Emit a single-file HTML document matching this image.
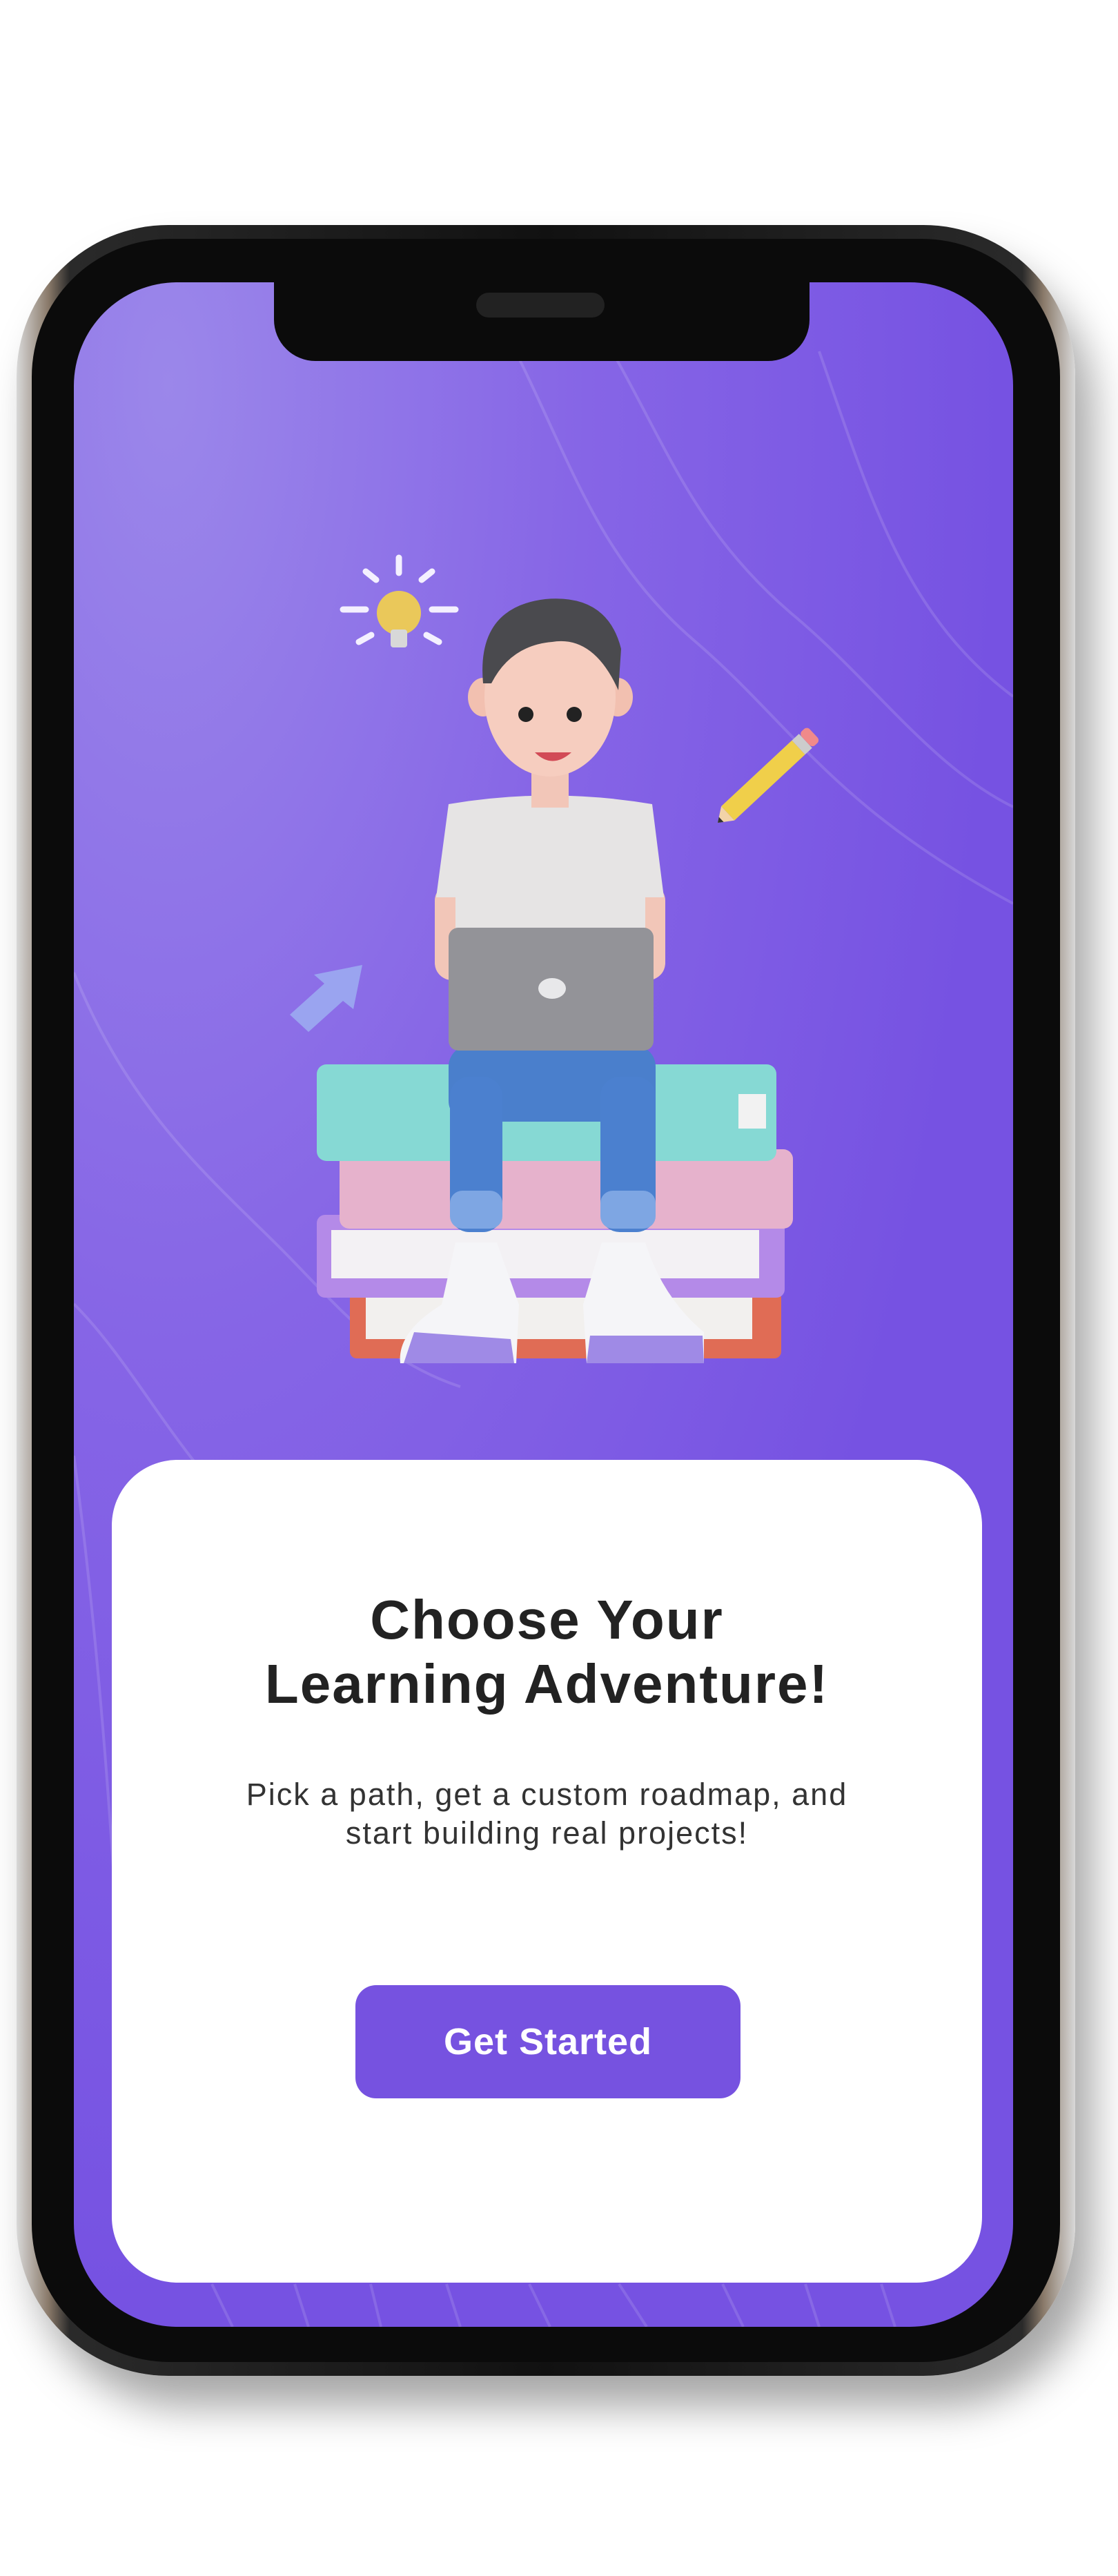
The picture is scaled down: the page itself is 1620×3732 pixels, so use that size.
<!DOCTYPE html>
<html><head><meta charset="utf-8"><style>
html,body{margin:0;padding:0;background:#fff;}
body{width:1620px;height:3732px;position:relative;overflow:hidden;font-family:"Liberation Sans",sans-serif;}
.abs{position:absolute;}
</style></head><body>
<!-- shadow -->
<div class="abs" style="left:24px;top:326px;width:1534px;height:3116px;border-radius:220px;box-shadow:25px 45px 60px rgba(0,0,0,0.35);"></div>
<!-- frame -->
<div class="abs" style="left:24px;top:326px;width:1534px;height:3116px;border-radius:220px;background:linear-gradient(90deg,#d8d8d8,#8a7a6a 3%,#2a2a2a 5%,#111 50%,#2a2a2a 95%,#8a7a6a 97%,#d8d8d8);"></div>
<div class="abs" style="left:46px;top:346px;width:1490px;height:3076px;border-radius:200px;background:#0b0b0b;"></div>
<!-- screen -->
<div class="abs" style="left:107px;top:409px;width:1361px;height:2962px;border-radius:150px;overflow:hidden;background:radial-gradient(ellipse at 10% 5%,#9b87ea 0%,#8665e6 35%,#7652e2 70%);">
<svg width="1361" height="2962" style="position:absolute;left:0;top:0" fill="none" stroke="rgba(255,255,255,0.13)" stroke-width="4">
<path d="M640 100 C720 260 760 400 900 520 C1040 640 1100 760 1361 900"/>
<path d="M780 100 C860 240 900 360 1040 480 C1160 580 1240 700 1361 760"/>
<path d="M1080 100 C1150 300 1200 480 1361 600"/>
<path d="M0 1000 C80 1200 200 1300 300 1400 C380 1480 440 1560 560 1600"/>
<path d="M0 1480 C80 1560 140 1680 220 1760"/>
<path d="M0 1700 C40 2000 60 2300 80 2700"/>
<path d="M200 2900 L230 2962 M320 2900 L340 2962 M430 2900 L445 2962 M540 2900 L560 2962 M660 2900 L690 2962 M790 2900 L830 2962 M940 2900 L970 2962 M1060 2900 L1080 2962 M1170 2900 L1190 2962"/>
</svg>
</div>
<!-- notch -->
<div class="abs" style="left:397px;top:400px;width:776px;height:123px;background:#0b0b0b;border-radius:0 0 60px 60px;"></div>
<div class="abs" style="left:690px;top:424px;width:186px;height:36px;border-radius:18px;background:#222;"></div>
<!-- illustration -->
<svg class="abs" style="left:0;top:0" width="1620" height="2100">
<g stroke="#f4f0ff" stroke-width="9" stroke-linecap="round">
<line x1="578" y1="808" x2="578" y2="830"/><line x1="530" y1="828" x2="545" y2="840"/><line x1="626" y1="828" x2="611" y2="840"/>
<line x1="497" y1="883" x2="530" y2="883"/><line x1="626" y1="883" x2="660" y2="883"/>
<line x1="520" y1="930" x2="538" y2="920"/><line x1="636" y1="930" x2="618" y2="920"/></g>
<circle cx="578" cy="888" r="32" fill="#eac85a"/><rect x="566" y="912" width="24" height="26" rx="4" fill="#d8d8d8"/>
<g transform="translate(1040,1192) rotate(-43)"><rect x="20" y="-14" width="140" height="28" fill="#f0cf4a"/><polygon points="0,0 20,-14 20,14" fill="#f2d3a8"/><polygon points="0,0 7,-5 7,5" fill="#333"/><rect x="160" y="-14" width="14" height="28" fill="#ccc"/><rect x="174" y="-14" width="16" height="28" rx="6" fill="#f08a8a"/></g>
<polygon points="420,1470 470,1425 455,1412 525,1398 512,1462 497,1450 447,1495" fill="#9aa4f0"/>
<rect x="507" y="1844" width="625" height="124" rx="10" fill="#e06c55"/><rect x="530" y="1870" width="560" height="70" fill="#f2f0ee"/>
<rect x="459" y="1760" width="678" height="120" rx="12" fill="#b48ae8"/><rect x="480" y="1782" width="620" height="70" fill="#f3f1f4"/>
<rect x="492" y="1665" width="657" height="115" rx="14" fill="#e6b2cc"/>
<rect x="459" y="1542" width="666" height="140" rx="14" fill="#86d9d4"/><rect x="1070" y="1585" width="40" height="50" fill="#f2f2f2"/>
<rect x="630" y="1280" width="58" height="140" rx="25" fill="#f2c6b8"/><rect x="906" y="1280" width="58" height="140" rx="25" fill="#f2c6b8"/>
<path d="M650 1165 Q797 1140 945 1165 L962 1300 L935 1300 L935 1380 L660 1380 L660 1300 L632 1300 Z" fill="#e6e4e4"/>
<rect x="770" y="1120" width="54" height="50" fill="#f2c6b8"/>
<ellipse cx="700" cy="1010" rx="22" ry="28" fill="#f2c0b0"/><ellipse cx="895" cy="1010" rx="22" ry="28" fill="#f2c0b0"/>
<ellipse cx="797" cy="1010" rx="95" ry="115" fill="#f6cdbf"/>
<path d="M700 990 Q690 880 790 868 Q880 860 900 940 L896 1000 Q860 920 800 930 Q740 935 712 990 Z" fill="#4a4a4e"/>
<circle cx="762" cy="1035" r="11" fill="#222"/><circle cx="832" cy="1035" r="11" fill="#222"/>
<path d="M775 1090 Q800 1115 828 1090 Z" fill="#d24a56"/>
<rect x="650" y="1515" width="300" height="110" rx="30" fill="#4a7fcc"/>
<rect x="652" y="1560" width="76" height="225" rx="28" fill="#4b80cf"/><rect x="870" y="1560" width="80" height="225" rx="28" fill="#4b80cf"/>
<rect x="652" y="1725" width="76" height="55" rx="18" fill="#7ea6e3"/><rect x="870" y="1725" width="80" height="55" rx="18" fill="#7ea6e3"/>
<rect x="650" y="1344" width="297" height="178" rx="14" fill="#939398"/><ellipse cx="800" cy="1432" rx="20" ry="15" fill="#e8e8ea"/>
<path d="M660 1800 L720 1800 L752 1890 L748 1975 L580 1975 Q575 1930 640 1890 Z" fill="#f5f5f8"/><path d="M600 1930 L740 1940 L745 1975 L585 1975 Z" fill="#9f8ae6"/>
<path d="M872 1800 L935 1800 Q960 1880 1020 1930 L1020 1975 L850 1975 L845 1890 Z" fill="#f5f5f8"/><path d="M855 1935 L1018 1935 L1020 1975 L850 1975 Z" fill="#9f8ae6"/>
</svg>
<!-- card -->
<div class="abs" style="left:162px;top:2115px;width:1261px;height:1192px;background:#fff;border-radius:95px;"></div>
<div class="abs" style="left:162px;top:2300px;width:1261px;text-align:center;font-weight:bold;font-size:80px;letter-spacing:2px;line-height:93px;color:#222;">Choose Your<br>Learning Adventure!</div>
<div class="abs" style="left:162px;top:2572px;width:1261px;text-align:center;font-size:45px;letter-spacing:2px;line-height:56px;color:#333;">Pick a path, get a custom roadmap, and<br>start building real projects!</div>
<div class="abs" style="left:515px;top:2876px;width:558px;height:164px;border-radius:30px;background:#7652e0;color:#fff;font-weight:bold;font-size:54px;letter-spacing:1px;line-height:164px;text-align:center;">Get Started</div>
</body></html>
